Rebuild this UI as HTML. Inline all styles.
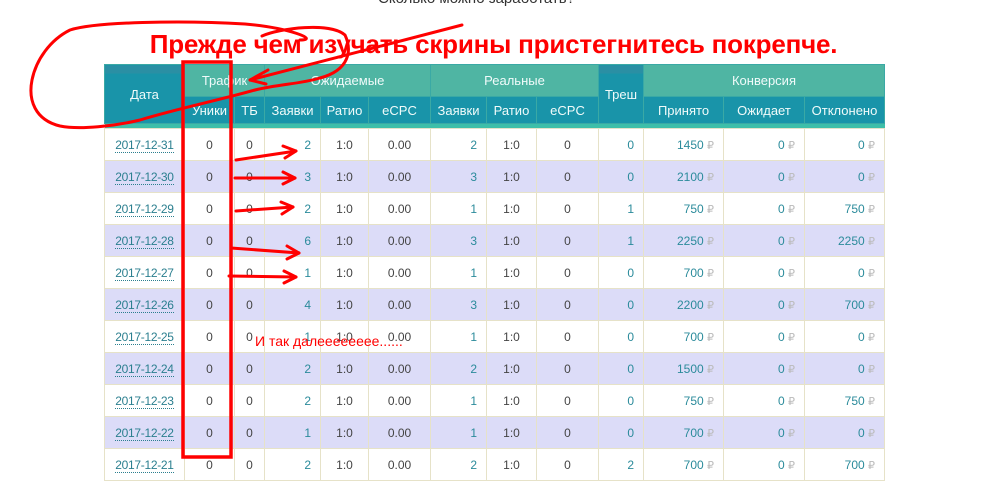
<!DOCTYPE html>
<html><head><meta charset="utf-8"><style>
body{margin:0;width:981px;height:467px;overflow:hidden;background:#fff;font-family:"Liberation Sans",sans-serif;position:relative}
table{position:absolute;left:104px;top:64px;border-collapse:collapse;table-layout:fixed;font-size:12px;color:#444}
td,th{padding:0;text-align:center;border:1px solid #e6e2c8;white-space:nowrap}
th{font-weight:normal;color:#f0fbfa;font-size:13px;border-color:#3aa9a5}
.g th{background:#4fb5a3;height:31px}
.s th{background:#1994a9;height:26px}
.stripe td{height:4px;background:#3ebfa9;border:none;padding:0}
th.d{background:linear-gradient(#2a8fa4 0 8px,#1994a9 8px)}
tbody td{height:31px}
tbody tr:nth-child(odd) td{background:#fff}
tbody tr:nth-child(even) td{background:#dcdcf8}
.dt{color:#2b7f8f;border-bottom:1px dotted #2b7f8f;font-size:12px;letter-spacing:-0.3px}
.r{text-align:right;padding-right:9px}
.l{color:#2b8b9b}
.rub{color:#bbb;font-size:11px}
</style></head><body>
<div style="position:absolute;left:378px;top:-10px;font-size:15px;color:#333">Сколько можно заработать?</div>
<table>
<colgroup><col width="80"><col width="50"><col width="30"><col width="56"><col width="48"><col width="62"><col width="56"><col width="50"><col width="62"><col width="45"><col width="80"><col width="81"><col width="80"></colgroup>
<thead>
<tr class="g"><th rowspan="2" class="d">Дата</th><th colspan="2">Трафик</th><th colspan="3">Ожидаемые</th><th colspan="3">Реальные</th><th rowspan="2" class="d">Треш</th><th colspan="3">Конверсия</th></tr>
<tr class="s"><th>Уники</th><th>ТБ</th><th>Заявки</th><th>Ратио</th><th>eCPC</th><th>Заявки</th><th>Ратио</th><th>eCPC</th><th>Принято</th><th>Ожидает</th><th>Отклонено</th></tr>
<tr class="stripe"><td colspan="13"></td></tr>
</thead>
<tbody>
<tr><td><span class="dt">2017-12-31</span></td><td>0</td><td>0</td><td class="r l">2</td><td>1:0</td><td>0.00</td><td class="r l">2</td><td>1:0</td><td>0</td><td class="r l">0</td><td class="r l">1450 <span class="rub">₽</span></td><td class="r l">0 <span class="rub">₽</span></td><td class="r l">0 <span class="rub">₽</span></td></tr>
<tr><td><span class="dt">2017-12-30</span></td><td>0</td><td>0</td><td class="r l">3</td><td>1:0</td><td>0.00</td><td class="r l">3</td><td>1:0</td><td>0</td><td class="r l">0</td><td class="r l">2100 <span class="rub">₽</span></td><td class="r l">0 <span class="rub">₽</span></td><td class="r l">0 <span class="rub">₽</span></td></tr>
<tr><td><span class="dt">2017-12-29</span></td><td>0</td><td>0</td><td class="r l">2</td><td>1:0</td><td>0.00</td><td class="r l">1</td><td>1:0</td><td>0</td><td class="r l">1</td><td class="r l">750 <span class="rub">₽</span></td><td class="r l">0 <span class="rub">₽</span></td><td class="r l">750 <span class="rub">₽</span></td></tr>
<tr><td><span class="dt">2017-12-28</span></td><td>0</td><td>0</td><td class="r l">6</td><td>1:0</td><td>0.00</td><td class="r l">3</td><td>1:0</td><td>0</td><td class="r l">1</td><td class="r l">2250 <span class="rub">₽</span></td><td class="r l">0 <span class="rub">₽</span></td><td class="r l">2250 <span class="rub">₽</span></td></tr>
<tr><td><span class="dt">2017-12-27</span></td><td>0</td><td>0</td><td class="r l">1</td><td>1:0</td><td>0.00</td><td class="r l">1</td><td>1:0</td><td>0</td><td class="r l">0</td><td class="r l">700 <span class="rub">₽</span></td><td class="r l">0 <span class="rub">₽</span></td><td class="r l">0 <span class="rub">₽</span></td></tr>
<tr><td><span class="dt">2017-12-26</span></td><td>0</td><td>0</td><td class="r l">4</td><td>1:0</td><td>0.00</td><td class="r l">3</td><td>1:0</td><td>0</td><td class="r l">0</td><td class="r l">2200 <span class="rub">₽</span></td><td class="r l">0 <span class="rub">₽</span></td><td class="r l">700 <span class="rub">₽</span></td></tr>
<tr><td><span class="dt">2017-12-25</span></td><td>0</td><td>0</td><td class="r l">1</td><td>1:0</td><td>0.00</td><td class="r l">1</td><td>1:0</td><td>0</td><td class="r l">0</td><td class="r l">700 <span class="rub">₽</span></td><td class="r l">0 <span class="rub">₽</span></td><td class="r l">0 <span class="rub">₽</span></td></tr>
<tr><td><span class="dt">2017-12-24</span></td><td>0</td><td>0</td><td class="r l">2</td><td>1:0</td><td>0.00</td><td class="r l">2</td><td>1:0</td><td>0</td><td class="r l">0</td><td class="r l">1500 <span class="rub">₽</span></td><td class="r l">0 <span class="rub">₽</span></td><td class="r l">0 <span class="rub">₽</span></td></tr>
<tr><td><span class="dt">2017-12-23</span></td><td>0</td><td>0</td><td class="r l">2</td><td>1:0</td><td>0.00</td><td class="r l">1</td><td>1:0</td><td>0</td><td class="r l">0</td><td class="r l">750 <span class="rub">₽</span></td><td class="r l">0 <span class="rub">₽</span></td><td class="r l">750 <span class="rub">₽</span></td></tr>
<tr><td><span class="dt">2017-12-22</span></td><td>0</td><td>0</td><td class="r l">1</td><td>1:0</td><td>0.00</td><td class="r l">1</td><td>1:0</td><td>0</td><td class="r l">0</td><td class="r l">700 <span class="rub">₽</span></td><td class="r l">0 <span class="rub">₽</span></td><td class="r l">0 <span class="rub">₽</span></td></tr>
<tr><td><span class="dt">2017-12-21</span></td><td>0</td><td>0</td><td class="r l">2</td><td>1:0</td><td>0.00</td><td class="r l">2</td><td>1:0</td><td>0</td><td class="r l">2</td><td class="r l">700 <span class="rub">₽</span></td><td class="r l">0 <span class="rub">₽</span></td><td class="r l">700 <span class="rub">₽</span></td></tr>
</tbody></table>
<div style="position:absolute;left:0;width:981px;top:29px;text-align:center;padding-left:6px;box-sizing:border-box;font-size:26px;font-weight:bold;color:#f00;letter-spacing:-0.2px">Прежде чем изучать скрины пристегнитесь покрепче.</div>
<div style="position:absolute;left:255px;top:333px;font-size:14px;color:#f00">И так далееееееее......</div>
<svg width="981" height="467" style="position:absolute;left:0;top:0" fill="none" stroke="#f00" stroke-width="3" stroke-linecap="round">
<rect x="183" y="62" width="48" height="395" stroke-width="3.5"/>
<path d="M262 36 C280 28,330 22,345 35 C352 50,350 70,320 78 C300 84,280 84,255 90 C220 100,180 108,140 120 C115 126,80 130,60 126 C35 120,28 100,32 80 C36 60,50 40,70 30 C95 22,180 20,245 24 C290 28,320 40,300 40"/>
<path d="M462 25 L250 80"/><path d="M250 80 L268 70 M250 80 L266 84"/>
<path d="M236 160 L296 151"/><path d="M296 151 L283 146 M296 151 L285 158"/>
<path d="M235 178 L295 178"/><path d="M295 178 L283 172 M295 178 L283 184"/>
<path d="M236 211 L293 207"/><path d="M293 207 L281 202 M293 207 L282 214"/>
<path d="M231 248 L299 253"/><path d="M299 253 L287 246 M299 253 L287 259"/>
<path d="M229 276 L296 277"/><path d="M296 277 L284 271 M296 277 L284 283"/>
</svg>
</body></html>
